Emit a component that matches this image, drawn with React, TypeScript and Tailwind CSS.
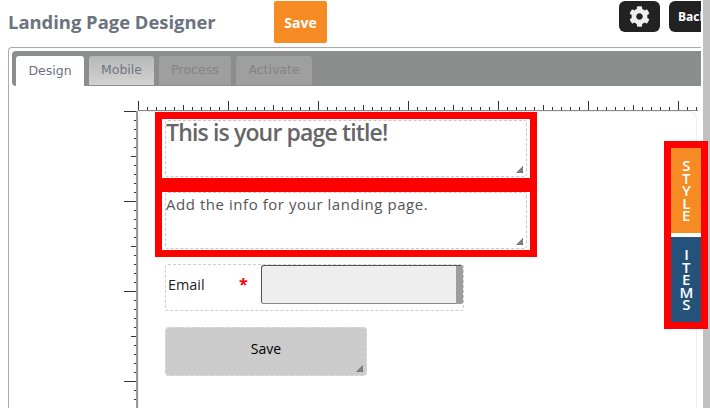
import React from "react";
import { FaCog } from "react-icons/fa";

const TICK_STEP = 9;

// horizontal ruler, ticks point up from the baseline
const RulerTop = () => {
  const ticks = [];
  for (let i = 0; i * TICK_STEP <= 560; i++) {
    const major = i % 10 === 0;
    const mid = i % 5 === 0;
    const h = major ? 9 : mid ? 5 : 3;
    const x = i * TICK_STEP + 0.5;
    ticks.push(<line key={i} x1={x} x2={x} y1={9 - h} y2={9} stroke="#333" strokeWidth="1" />);
  }
  return (
    <svg width="560" height="10" className="block">
      {ticks}
      <line x1="0" x2="560" y1="9.5" y2="9.5" stroke="#888" strokeWidth="1" />
    </svg>
  );
};

// vertical ruler, ticks point left from the baseline
const RulerLeft = () => {
  const ticks = [];
  for (let i = 0; i * TICK_STEP <= 300; i++) {
    const major = i % 10 === 0;
    const mid = i % 5 === 0;
    const w = major ? 12 : mid ? 5 : 2;
    const y = i * TICK_STEP + 0.5;
    ticks.push(<line key={i} x1={12 - w} x2={12} y1={y} y2={y} stroke="#333" strokeWidth="1" />);
  }
  return (
    <svg width="14" height="297" className="block shrink-0">
      {ticks}
      <line x1="13" x2="13" y1="0" y2="297" stroke="#999" strokeWidth="2" />
    </svg>
  );
};

const ResizeHandle = () => (
  <svg width="7" height="7" className="block" viewBox="0 0 7 7">
    <path d="M0 7 L7 0 L7 7 Z" fill="#666" />
    <path d="M2 7 L7 2 M4 7 L7 4" stroke="#bbb" strokeWidth="0.6" />
  </svg>
);

const Tab = ({ label, look }: { label: string; look: string }) => (
  <div className={`flex items-center justify-center rounded-t-[3px] text-[12.5px] ${look}`}>{label}</div>
);

const TextBlock = ({ children, big }: { children: string; big?: boolean }) => (
  <div className={`border-[7px] border-[#ff0000] px-[3px] pb-px ${big ? "pt-px" : ""}`}>
    <div className="flex h-[57px] flex-col justify-between rounded-[3px] border border-dashed border-[#c8c8c8] bg-white">
      <div
        className={
          big
            ? "text-[23px] font-semibold leading-[22px] tracking-[-0.85px] text-[#666]"
            : "pt-[2px] text-[15px] leading-[19px] tracking-[0.55px] text-[#555]"
        }
      >
        {children}
      </div>
      <div className="flex justify-end pb-[3px] pr-[3px]">
        <ResizeHandle />
      </div>
    </div>
  </div>
);

export default function App() {
  return (
    <div
      className="relative flex h-[408px] w-[710px] overflow-hidden bg-white"
      style={{ fontFamily: '"Open Sans", sans-serif' }}
    >
      <div className="w-[701px] shrink-0 overflow-hidden">
        {/* header */}
        <div className="flex h-[47px] pl-2 pt-px">
          <h1 className="w-[266px] shrink-0 pt-[9px] text-[18.4px] font-bold leading-6 text-[#6b7280]">
            Landing Page Designer
          </h1>
          <button className="h-[42px] w-[53px] shrink-0 rounded-[2px] bg-[#f68b24] text-[14px] font-bold text-white">
            Save
          </button>
          <button className="ml-[292px] flex h-[31px] w-[41px] shrink-0 items-center justify-center rounded-[6px] bg-[#222]">
            <FaCog className="text-[21px] text-[#eee]" />
          </button>
          <button className="ml-[9px] h-[31px] w-[50px] shrink-0 rounded-[6px] bg-[#222] pl-[9px] text-left text-[12px] font-bold text-white">
            Back
          </button>
        </div>

        {/* designer frame */}
        <div className="ml-2 h-[400px] rounded-tl-[4px] border-l border-t border-[#aaa] pl-[3px] pt-[3px]">
          <div
            className="flex h-[35px] items-end gap-[5px] rounded-l-[4px] bg-[#8c8e8d] pl-1"
            style={{ fontFamily: '"DejaVu Sans", sans-serif' }}
          >
            <Tab label="Design" look="h-[30px] w-[68px] bg-white text-[#6b7280]" />
            <Tab label="Mobile" look="mb-px h-[29px] w-[65px] bg-gradient-to-b from-[#b8b8b8] to-[#d2d2d2] text-[#6f7580]" />
            <Tab label="Process" look="mb-px h-[29px] w-[72px] bg-[#9e9f9e] text-[#838483]" />
            <Tab label="Activate" look="mb-px h-[29px] w-[76px] bg-[#9e9f9e] text-[#838483]" />
          </div>

          <div className="pl-[112px] pt-[15px]">
            <div className="pl-[14px]">
              <RulerTop />
            </div>
            <div className="flex">
              <RulerLeft />
              <div className="h-[297px] w-[559px] rounded-t-[8px] border-l border-r border-t border-[#eee] pl-[16px]">
                <div className="w-[382px]">
                  <TextBlock big>This is your page title!</TextBlock>
                  <TextBlock>Add the info for your landing page.</TextBlock>
                </div>

                {/* email field */}
                <div className="ml-[10px] mt-[7px] flex h-[47px] w-[299px] items-start rounded-[3px] border border-dashed border-[#ccc]">
                  <span className="w-[73px] pl-[2px] pt-[10px] text-[14.4px] leading-[19px] text-[#222]">Email</span>
                  <span className="w-[22px] pt-[10px] text-[16px] font-bold leading-[19px] text-[#ff0000]">*</span>
                  <div className="flex h-[39px] w-[202px] rounded-[3px] border-l border-t border-[#555] bg-[#eee]">
                    <div className="flex-1 border-b border-[#888]" />
                    <div className="w-[7px] rounded-r-[2px] bg-[#9e9e9e]" />
                  </div>
                </div>

                {/* submit */}
                <div className="ml-[10px] mt-[16px] flex h-[49px] w-[202px] flex-col rounded-[4px] border border-dashed border-[#ddd] bg-[#ccc]">
                  <div className="pt-[11px] text-center text-[14px] font-medium leading-[20px] text-black">Save</div>
                  <div className="mt-auto flex justify-end pb-[3px] pr-[3px]">
                    <ResizeHandle />
                  </div>
                </div>
              </div>
            </div>
          </div>
        </div>
      </div>

      {/* scrollbar */}
      <div className="ml-[2px] flex-1 bg-[#c1c1c1]" />

      {/* style / items flyout, sits over the page edge */}
      <div className="absolute left-[664px] top-[141px] flex w-[44px] flex-col border-[7px] border-[#ff0000] bg-white text-[15px] font-semibold text-white">
        <div className="flex h-[85px] items-center justify-center bg-[#f68b24] pb-[8px]">
          <span className="tracking-[-7.4px] [text-orientation:upright] [writing-mode:vertical-rl]">STYLE</span>
        </div>
        <div className="mt-1 flex h-[85px] items-center justify-center bg-[#24527a] pb-[8px]">
          <span className="tracking-[-7.4px] [text-orientation:upright] [writing-mode:vertical-rl]">ITEMS</span>
        </div>
      </div>
    </div>
  );
}
